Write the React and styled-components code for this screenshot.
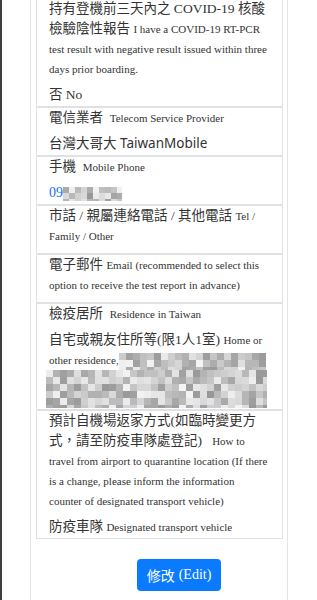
import React from "react";
import styled, { createGlobalStyle } from "styled-components";

const Global = createGlobalStyle`
  *, *::before, *::after { box-sizing: border-box; }
  html, body { margin: 0; padding: 0; background: #fff; overflow: hidden; }
  body { font-family: "Liberation Serif", "Noto Sans CJK TC", serif; color: #333; }
`;

const Frame = styled.div`
  display: flex;
  margin-top: -3px;
  border-left: 2px solid #3f3f3f;
  padding-left: 28px;
  min-height: 620px;
`;

const Card = styled.div`
  width: 258px;
  border: 1px solid #e2e4e6;
  border-bottom: none;
  padding: 0 4px 0 5px;
`;

const Table = styled.div`
  border: 1px solid #dee2e6;
  display: flex;
  flex-direction: column;
`;

const Row = styled.div`
  border-top: ${(p) => (p.$first ? "none" : "2px solid #dee2e6")};
  padding: 0 13px 1px 12px;
`;

const Label = styled.div`
  font-family: "Liberation Serif", serif;
  font-size: 13.5px;
  line-height: 20px;
`;

const Zh = styled.span`
  font-family: "Liberation Serif", "Noto Sans CJK TC", serif;
  font-size: 13.5px;
  line-height: 1;
  color: #333;
`;

const En = styled.span`
  font-family: "Liberation Serif", serif;
  font-size: 11px;
  line-height: 1;
  color: #333;
`;

const Value = styled.div`
  margin-top: 6px;
  line-height: 20px;
  font-size: 13.5px;
  font-family: "Liberation Serif", serif;
  color: #333;
`;

const ValueText = styled.span`
  line-height: 1;
  font-family: ${(p) =>
    p.$sans
      ? `"Noto Sans", "Noto Sans CJK TC", sans-serif`
      : `"Liberation Serif", "Noto Sans CJK TC", serif`};
`;

const Link = styled.span`
  color: #1a73f0;
  font-size: 14px;
  line-height: 1;
`;

const BlurInline = styled.svg`
  display: inline-block;
  vertical-align: ${(p) => p.$valign || "middle"};
`;

const BlurBlock = styled.svg`
  display: block;
  margin-left: -3px;
`;

const Actions = styled.div`
  padding: 20px 0 0 101px;
`;

const Button = styled.button`
  width: 84px;
  height: 32px;
  background: #0a7bff;
  border: none;
  border-radius: 4px;
  color: #fff;
  font-size: 14px;
  font-family: "Liberation Serif", "Noto Sans CJK TC", serif;
  padding: 0;
  display: flex;
  align-items: center;
  justify-content: center;
  gap: 4px;
`;

const BtnZh = styled.span`
  font-family: "Noto Sans CJK TC", sans-serif;
`;

function Mosaic({ w, h, cell = 7, seed = 1, as: Comp = BlurInline, valign }) {
  let s = seed * 9301 + 49297;
  const rnd = () => {
    s = (s * 9301 + 49297) % 233280;
    return s / 233280;
  };
  const cells = [];
  for (let y = 0; y < h; y += cell) {
    for (let x = 0; x < w; x += cell) {
      const v = Math.round(150 + rnd() * 95);
      cells.push(
        <rect key={`${x}-${y}`} x={x} y={y} width={cell} height={cell} fill={`rgb(${v},${v},${v})`} />
      );
    }
  }
  return (
    <Comp width={w} height={h} viewBox={`0 0 ${w} ${h}`} $valign={valign}>
      {cells}
    </Comp>
  );
}

export default function App() {
  return (
    <>
      <Global />
      <Frame>
        <Card>
          <Table>
            <Row $first>
              <Label>
                <Zh>持有登機前三天內之 COVID-19 核酸檢驗陰性報告</Zh>{" "}
                <En>I have a COVID-19 RT-PCR test result with negative result issued within three days prior boarding.</En>
              </Label>
              <Value>
                <ValueText>否 No</ValueText>
              </Value>
            </Row>
            <Row>
              <Label>
                <Zh>電信業者</Zh>&nbsp; <En>Telecom Service Provider</En>
              </Label>
              <Value>
                <ValueText $sans>台灣大哥大 TaiwanMobile</ValueText>
              </Value>
            </Row>
            <Row>
              <Label>
                <Zh>手機</Zh>&nbsp; <En>Mobile Phone</En>
              </Label>
              <Value>
                <Link>09</Link>
                <Mosaic w={59} h={14} cell={6} seed={3} />
              </Value>
            </Row>
            <Row>
              <Label>
                <Zh>市話 / 親屬連絡電話 / 其他電話</Zh> <En>Tel / Family / Other</En>
              </Label>
              <Value />
            </Row>
            <Row>
              <Label>
                <Zh>電子郵件</Zh> <En>Email (recommended to select this option to receive the test report in advance)</En>
              </Label>
              <Value />
            </Row>
            <Row>
              <Label>
                <Zh>檢疫居所</Zh>&nbsp; <En>Residence in Taiwan</En>
              </Label>
              <Value>
                <ValueText>自宅或親友住所等(限1人1室)</ValueText> <En>Home or other residence,</En>
                <Mosaic w={147} h={17} cell={7} seed={7} valign="bottom" />
                <Mosaic w={221} h={38} cell={7} seed={11} as={BlurBlock} />
              </Value>
            </Row>
            <Row>
              <Label>
                <Zh>預計自機場返家方式(如臨時變更方式，請至防疫車隊處登記)</Zh>&nbsp;&nbsp;{" "}
                <En>How to travel from airport to quarantine location (If there is a change, please inform the information counter of designated transport vehicle)</En>
              </Label>
              <Value>
                <ValueText>防疫車隊</ValueText> <En>Designated transport vehicle</En>
              </Value>
            </Row>
          </Table>
          <Actions>
            <Button>
              <BtnZh>修改</BtnZh>
              <span>(Edit)</span>
            </Button>
          </Actions>
        </Card>
      </Frame>
    </>
  );
}
